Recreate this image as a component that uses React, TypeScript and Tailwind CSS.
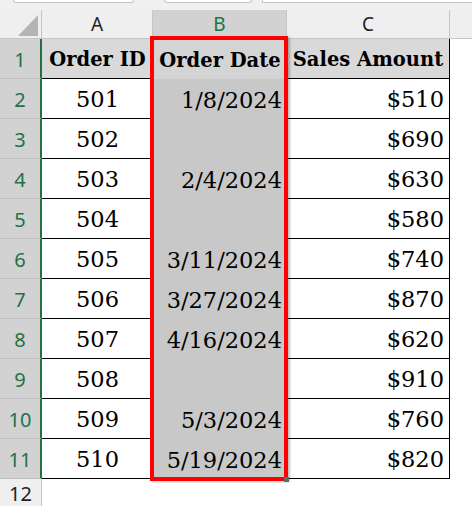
import React from 'react';

type Row = { id: string; date: string; amount: string };

const rows: Row[] = [
    { id: '501', date: '1/8/2024', amount: '$510' },
    { id: '502', date: '', amount: '$690' },
    { id: '503', date: '2/4/2024', amount: '$630' },
    { id: '504', date: '', amount: '$580' },
    { id: '505', date: '3/11/2024', amount: '$740' },
    { id: '506', date: '3/27/2024', amount: '$870' },
    { id: '507', date: '4/16/2024', amount: '$620' },
    { id: '508', date: '', amount: '$910' },
    { id: '509', date: '5/3/2024', amount: '$760' },
    { id: '510', date: '5/19/2024', amount: '$820' },
];

const cellFont = "font-['DejaVu_Serif',serif] text-[22.5px] text-black pt-[3px]";
const boldFont = "font-['DejaVu_Serif',serif] text-[19.5px] font-bold text-black pt-[3px]";
const colHead = "font-['Noto_Sans',sans-serif] text-[19px]";
const rowHead = "font-['Noto_Sans',sans-serif] text-[20px] pt-[3px]";

const App: React.FC = () => {
    return (
        <div className="relative w-[472px] h-[506px] overflow-hidden bg-white">
            {/* formula bar edge */}
            <div className="flex h-[10px] bg-[#f0f0f0]">
                <div className="ml-[13px] w-[121px] h-[3px] bg-white border-b border-x border-[#c6c6c6] rounded-b-[3px]" />
                <div className="ml-[30px] w-[88px] h-[3px] bg-white border-b border-x border-[#c6c6c6] rounded-b-[3px]" />
                <div className="ml-[10px] flex-1 h-[3px] bg-white border-b border-l border-[#c6c6c6]" />
            </div>

            {/* column headers */}
            <div className={`flex h-[29px] bg-[#efefef] border-b border-[#c6c6c6] ${colHead}`}>
                <div className="w-[42px] border-r border-[#c6c6c6] flex items-end justify-end pr-[3px] pb-[2px]">
                    <svg width="20" height="21" viewBox="0 0 20 21">
                        <polygon points="20,0 20,21 0,21" fill="#b4b4b4" />
                    </svg>
                </div>
                <div className="w-[111px] border-r border-[#c6c6c6] flex items-center justify-center text-[#222]">A</div>
                <div className="w-[134px] border-r border-[#c6c6c6] bg-[#d2d2d2] flex items-center justify-center text-[#217346]">B</div>
                <div className="w-[163px] border-r border-[#c6c6c6] flex items-center justify-center text-[#222]">C</div>
                <div className="flex-1" />
            </div>

            {/* header row 1 */}
            <div className="flex h-[40px]">
                <div className={`w-[42px] bg-[#d2d2d2] border-b border-[#bdbdbd] border-r-2 border-r-[#217346] flex items-center justify-center ${rowHead} text-[#217346]`}>1</div>
                <div className={`w-[111px] bg-[#d9d9d9] border-b border-black flex items-center justify-center ${boldFont}`}>Order ID</div>
                <div className={`w-[134px] bg-[#d4d4d4] flex items-center justify-center ${boldFont}`}>Order Date</div>
                <div className={`w-[163px] bg-[#d9d9d9] border-b border-r border-black flex items-center justify-center ${boldFont}`}>Sales Amount</div>
                <div className="flex-1" />
            </div>

            {rows.map((r, i) => (
                <div key={r.id} className="flex h-[40px]">
                    <div className={`w-[42px] bg-[#d2d2d2] border-b border-[#bdbdbd] border-r-2 border-r-[#217346] flex items-center justify-center ${rowHead} text-[#217346]`}>{i + 2}</div>
                    <div className={`w-[111px] border-b border-black flex items-center justify-center ${cellFont}`}>{r.id}</div>
                    <div className={`w-[134px] bg-[#c8c8c8] flex items-center justify-end pr-[5px] ${cellFont}`}>{r.date}</div>
                    <div className={`w-[163px] border-b border-r border-black flex items-center justify-end pr-[5px] ${cellFont}`}>{r.amount}</div>
                    <div className="flex-1" />
                </div>
            ))}

            {/* row 12 */}
            <div className="flex h-[27px]">
                <div className={`w-[42px] bg-[#efefef] border-r border-[#c6c6c6] flex items-center justify-center ${rowHead} text-[#222]`}>12</div>
                <div className="flex-1" />
            </div>

            {/* selection highlight over column B */}
            <div className="absolute left-[150px] top-[36px] w-[138px] h-[445px] border-4 border-[#ff0000] shadow-[2px_1px_2px_rgba(0,0,0,0.25)]" />
            <div className="absolute left-[284px] top-[477px] w-[5px] h-[5px] bg-[#4f7a5f]" />
        </div>
    );
};

export default App;
